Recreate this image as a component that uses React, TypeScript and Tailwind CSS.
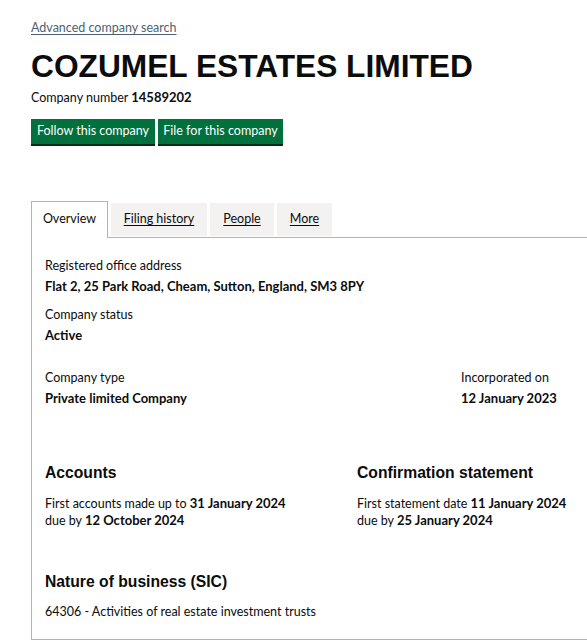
const body = "font-['Lato','Noto_Sans',sans-serif]";
const head = "font-['Liberation_Sans',Arial,sans-serif]";

function Field({ label, value, className = '' }: { label: string; value: string; className?: string }) {
  return (
    <div className={className}>
      <div className="text-[12.5px] leading-5">{label}</div>
      <div className="text-[13px] leading-5 font-bold">{value}</div>
    </div>
  );
}

export default function App() {
  return (
    <div className={`w-[587px] h-[640px] overflow-hidden bg-white ${body} text-[#0b0c0c]`}>
      <div className="pl-[31px] pt-[18px]">
        <a href="#" className="block text-[12.5px] leading-5 text-[#4c6272] underline underline-offset-2">
          Advanced company search
        </a>
        <h1 className={`${head} text-[31.7px] font-bold leading-none mt-[13px] whitespace-nowrap`}>
          COZUMEL ESTATES LIMITED
        </h1>
        <div className="text-[12.5px] leading-5 mt-[4px]">
          Company number <span className="font-bold text-[13px]">14589202</span>
        </div>
        <div className="flex gap-[3px] mt-[11px]">
          <button className="w-[124px] bg-[#00703c] text-white text-[12.5px] h-[25px] shadow-[0_2px_0_#002d18]">
            Follow this company
          </button>
          <button className="w-[125px] bg-[#00703c] text-white text-[12.5px] h-[25px] shadow-[0_2px_0_#002d18]">
            File for this company
          </button>
        </div>

        <div className="mt-[57px] flex items-end border-b border-[#b1b4b6] text-[12.5px]">
          <div className="w-[77px] h-[37px] -mb-px border border-b-0 border-[#b1b4b6] bg-white flex items-center justify-center">
            Overview
          </div>
          <div className="ml-[3px] w-[96px] h-[33px] bg-[#f3f2f1] flex items-center justify-center underline underline-offset-2 mb-[1px]">
            Filing history
          </div>
          <div className="ml-[3px] w-[64px] h-[33px] bg-[#f3f2f1] flex items-center justify-center underline underline-offset-2 mb-[1px]">
            People
          </div>
          <div className="ml-[3px] w-[55px] h-[33px] bg-[#f3f2f1] flex items-center justify-center underline underline-offset-2 mb-[1px]">
            More
          </div>
        </div>

        <div className="border-l border-b border-[#b1b4b6] h-[402px] pl-[13px] pt-[18px]">
          <Field label="Registered office address" value="Flat 2, 25 Park Road, Cheam, Sutton, England, SM3 8PY" />
          <Field label="Company status" value="Active" className="mt-[9px]" />
          <div className="flex mt-[23px]">
            <Field label="Company type" value="Private limited Company" className="w-[416px]" />
            <Field label="Incorporated on" value="12 January 2023" />
          </div>
          <div className="flex mt-[55px]">
            <div className="w-[312px]">
              <h2 className={`${head} text-[15.7px] font-bold leading-5`}>Accounts</h2>
              <div className="text-[12.5px] leading-[17px] mt-[12px]">
                First accounts made up to <span className="font-bold text-[13px]">31 January 2024</span>
                <br />
                due by <span className="font-bold text-[13px]">12 October 2024</span>
              </div>
            </div>
            <div>
              <h2 className={`${head} text-[15.7px] font-bold leading-5`}>Confirmation statement</h2>
              <div className="text-[12.5px] leading-[17px] mt-[12px]">
                First statement date <span className="font-bold text-[13px]">11 January 2024</span>
                <br />
                due by <span className="font-bold text-[13px]">25 January 2024</span>
              </div>
            </div>
          </div>
          <h2 className={`${head} text-[15.7px] font-bold leading-5 mt-[43px]`}>Nature of business (SIC)</h2>
          <div className="text-[12.5px] leading-5 mt-[10px]">64306 - Activities of real estate investment trusts</div>
        </div>
      </div>
    </div>
  );
}
